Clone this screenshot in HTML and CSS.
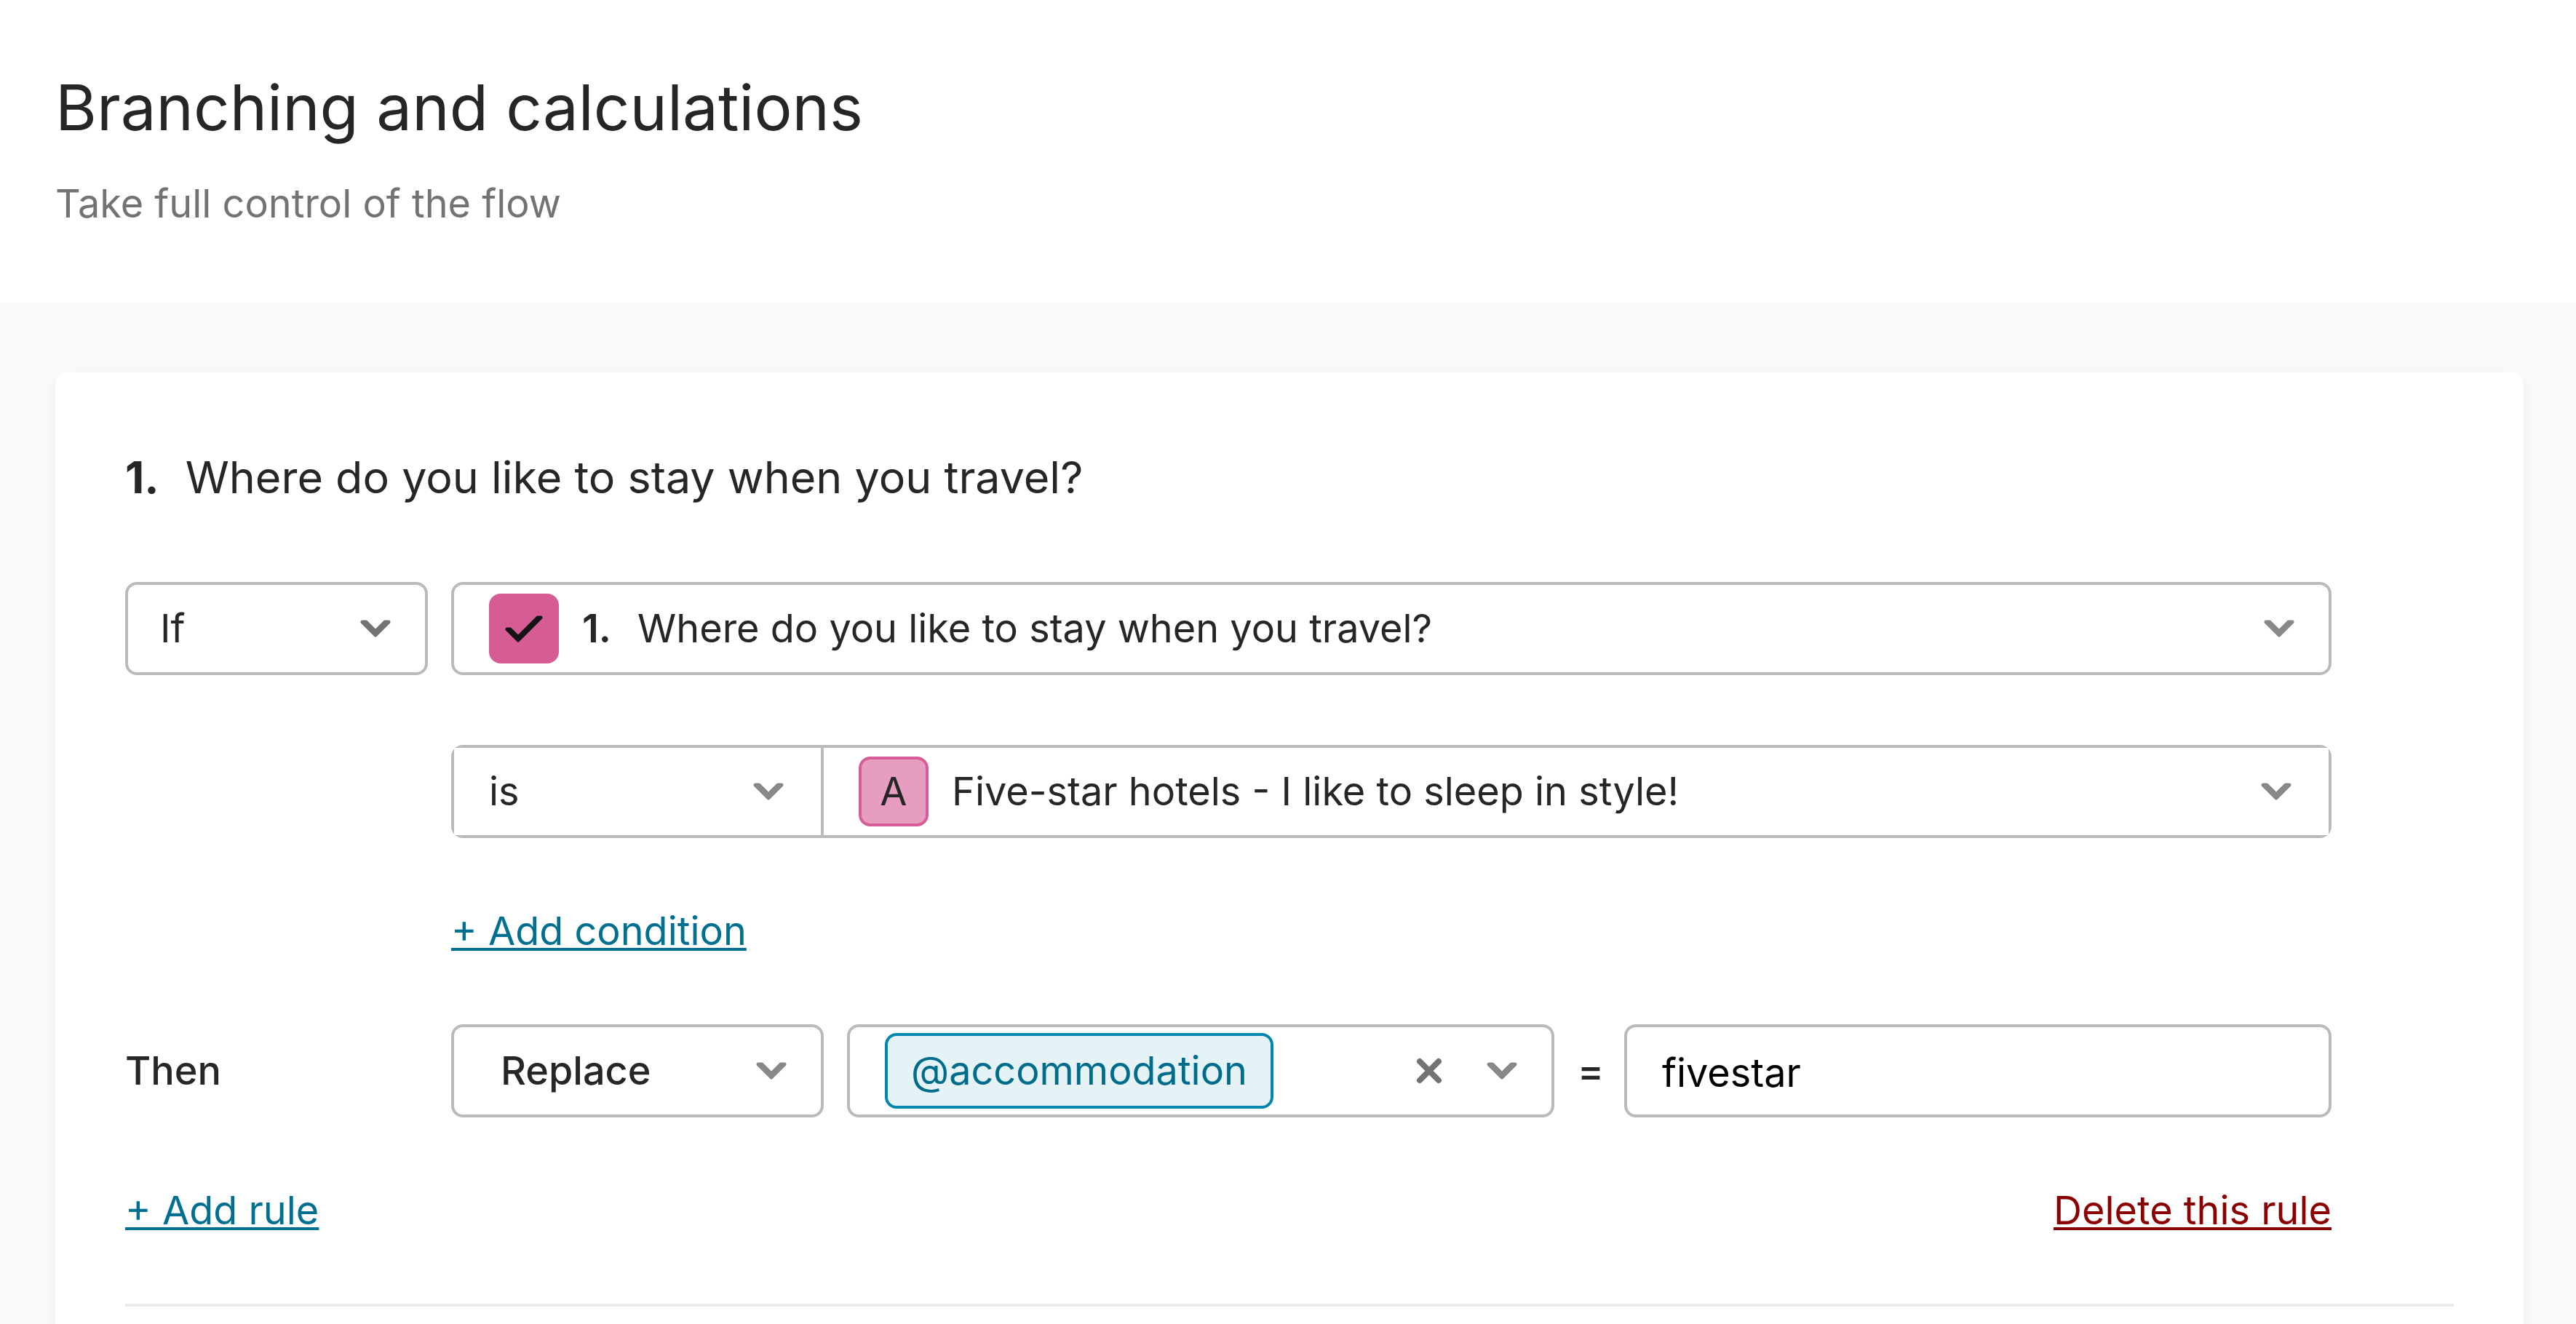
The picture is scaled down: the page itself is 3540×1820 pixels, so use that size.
FILE: index.html
```html
<!DOCTYPE html>
<html lang="en">
<head>
  <meta charset="UTF-8">
  <meta name="viewport" content="width=device-width, initial-scale=1">
  <title>Branching and calculations</title>
  <link rel="stylesheet" href="styles.css">
</head>
<body>
  <header class="page-header">
    <h1>Branching and calculations</h1>
    <p>Take full control of the flow</p>
  </header>

  <main class="page-body">
    <section class="card">
      <h2 class="question"><b>1.</b><span>Where do you like to stay when you travel?</span></h2>

      <form class="rule">
        <!-- if -->
        <div class="row">
          <div class="field lead dark">
            <select class="narrow" aria-label="Condition type">
              <option>If</option>
            </select>
            <svg class="chevron" viewBox="0 0 44 26"><path d="M4 4h5l13 13L35 4h5L22 22z"/></svg>
          </div>
          <div class="field">
            <span class="badge">
              <svg class="check" viewBox="0 0 54 38"><path d="M4 20h4l11 11L46 4h4L19 35z"/></svg>
            </span>
            <label class="number" for="subject">1.</label>
            <select id="subject">
              <option>Where do you like to stay when you travel?</option>
            </select>
            <svg class="chevron" viewBox="0 0 44 26"><path d="M4 4h5l13 13L35 4h5L22 22z"/></svg>
          </div>
        </div>

        <div class="row indent">
          <div class="group">
            <div class="field operator">
              <select class="padded" aria-label="Operator">
                <option>is</option>
              </select>
              <svg class="chevron" viewBox="0 0 44 26"><path d="M4 4h5l13 13L35 4h5L22 22z"/></svg>
            </div>
            <div class="field">
              <label class="badge letter" for="answer">A</label>
              <select id="answer">
                <option>Five-star hotels - I like to sleep in style!</option>
              </select>
              <svg class="chevron" viewBox="0 0 44 26"><path d="M4 4h5l13 13L35 4h5L22 22z"/></svg>
            </div>
          </div>
        </div>

        <div class="row indent">
          <a class="link" href="#">+ Add condition</a>
        </div>

        <!-- then -->
        <div class="row">
          <label class="lead then" for="action">Then</label>
          <div class="field operator">
            <select id="action" class="action">
              <option>Replace</option>
            </select>
            <svg class="chevron" viewBox="0 0 44 26"><path d="M4 4h5l13 13L35 4h5L22 22z"/></svg>
          </div>
          <div class="field variable">
            <select class="tag" aria-label="Variable">
              <option>@accommodation</option>
            </select>
            <button class="clear" type="button" aria-label="Clear">
              <svg viewBox="0 0 36 36"><path d="M5 5l26 26M31 5L5 31"/></svg>
            </button>
            <svg class="chevron" viewBox="0 0 44 26"><path d="M4 4h5l13 13L35 4h5L22 22z"/></svg>
          </div>
          <label class="equals" for="value">=</label>
          <input class="field value" id="value" type="text" value="fivestar">
        </div>

        <div class="row footer">
          <a class="link" href="#">+ Add rule</a>
          <a class="link danger" href="#">Delete this rule</a>
        </div>
      </form>
      <hr>
    </section>
  </main>
</body>
</html>
```
FILE: styles.css
```css
* {
  box-sizing: border-box;
}
body {
  display: flex;
  flex-direction: column;
  height: 100vh;
  margin: 0;
  overflow: hidden;
  background-color: #fafafa;
  color: #262627;
  font-family: Inter, "Liberation Sans", sans-serif;
  font-size: 54px;
  line-height: 64px;
}

/* header */
.page-header {
  flex-shrink: 0;
  padding: 100px 76px 96px;
  background-color: #fff;
}
h1 {
  margin: 0 0 44px;
  font-size: 87px;
  font-weight: 400;
  line-height: 96px;
}
.page-header p {
  margin: 0;
  color: #737373;
  line-height: 80px;
}

/* card */
.page-body {
  flex: 1;
  min-height: 0;
  padding: 96px 72px 0 76px;
  overflow: hidden;
}
.card {
  padding: 96px;
  background-color: #fff;
  border-radius: 16px;
  box-shadow: 0 8px 24px rgba(0, 0, 0, 0.06);
}
.question {
  display: flex;
  gap: 36px;
  margin: 0 0 96px;
  font-size: 61px;
  font-weight: 400;
  line-height: 96px;
}
.rule {
  display: flex;
  flex-direction: column;
  gap: 96px;
  padding-right: 168px;
}
hr {
  margin: 96px 0 0;
  border: none;
  border-top: 4px solid #ececec;
}
.row {
  display: flex;
  align-items: center;
  gap: 32px;
}
.indent {
  padding-left: 448px;
}
.lead {
  flex: 0 0 416px;
}

/* fields */
.field {
  display: flex;
  align-items: center;
  position: relative;
  flex: 1 1 200px;
  min-width: 0;
  height: 128px;
  border: 4px solid #bababa;
  border-radius: 16px;
  background-color: #fff;
}
.field.lead {
  flex: 0 0 416px;
}
.field.operator {
  flex: 0 0 512px;
}
select, input, button {
  font: inherit;
  color: inherit;
}
select {
  flex: 1;
  min-width: 0;
  height: 100%;
  padding: 0 112px 0 32px;
  border: none;
  background: transparent;
  appearance: none;
}
.narrow {
  padding-left: 44px;
}
.padded {
  padding-left: 48px;
}
.action {
  padding-left: 64px;
  font-weight: 500;
}
.chevron {
  position: absolute;
  right: 46px;
  width: 44px;
  height: 26px;
  fill: #888;
  stroke: #888;
  stroke-width: 5px;
  stroke-linejoin: round;
  pointer-events: none;
}
.dark .chevron {
  fill: #737373;
  stroke: #737373;
}
.badge {
  display: flex;
  align-items: center;
  justify-content: center;
  flex: 0 0 96px;
  height: 96px;
  margin-left: 48px;
  border-radius: 16px;
  background-color: #d65c96;
}
.check {
  width: 54px;
  height: 38px;
  fill: #141414;
  stroke: #141414;
  stroke-width: 5px;
  stroke-linejoin: round;
}
.letter {
  border: 4px solid #d65c96;
  background-color: #e69dc0;
}
.number {
  margin: 0 4px 0 32px;
  font-weight: 600;
}

/* joined pair of fields */
.group {
  display: flex;
  flex: 1;
  border-radius: 16px;
  overflow: hidden;
}
.group .field {
  border-radius: 0;
}
.group .field + .field {
  border-left: none;
}
.group .chevron {
  right: 50px;
}

/* then row */
.then, .equals {
  font-weight: 500;
}
.equals {
  flex: 0 0 32px;
  min-width: 0;
  text-align: center;
}
.variable {
  padding-left: 48px;
}
.tag {
  flex: none;
  height: 104px;
  padding: 0 32px;
  border: 4px solid #0087af;
  border-radius: 16px;
  background-color: #e5f2f6;
  color: #006c8c;
}
.clear {
  display: flex;
  margin: 0 150px 0 auto;
  padding: 0;
  border: none;
  background: none;
}
.clear svg {
  width: 36px;
  height: 36px;
  stroke: #737373;
  stroke-width: 8px;
  stroke-linecap: round;
}
.value {
  padding: 4px 48px 0;
  color: #000;
}

.link {
  color: #006f90;
  text-decoration-thickness: 4px;
  text-underline-offset: 4px;
}
.footer {
  justify-content: space-between;
}
.danger {
  color: #8b0000;
}
```
